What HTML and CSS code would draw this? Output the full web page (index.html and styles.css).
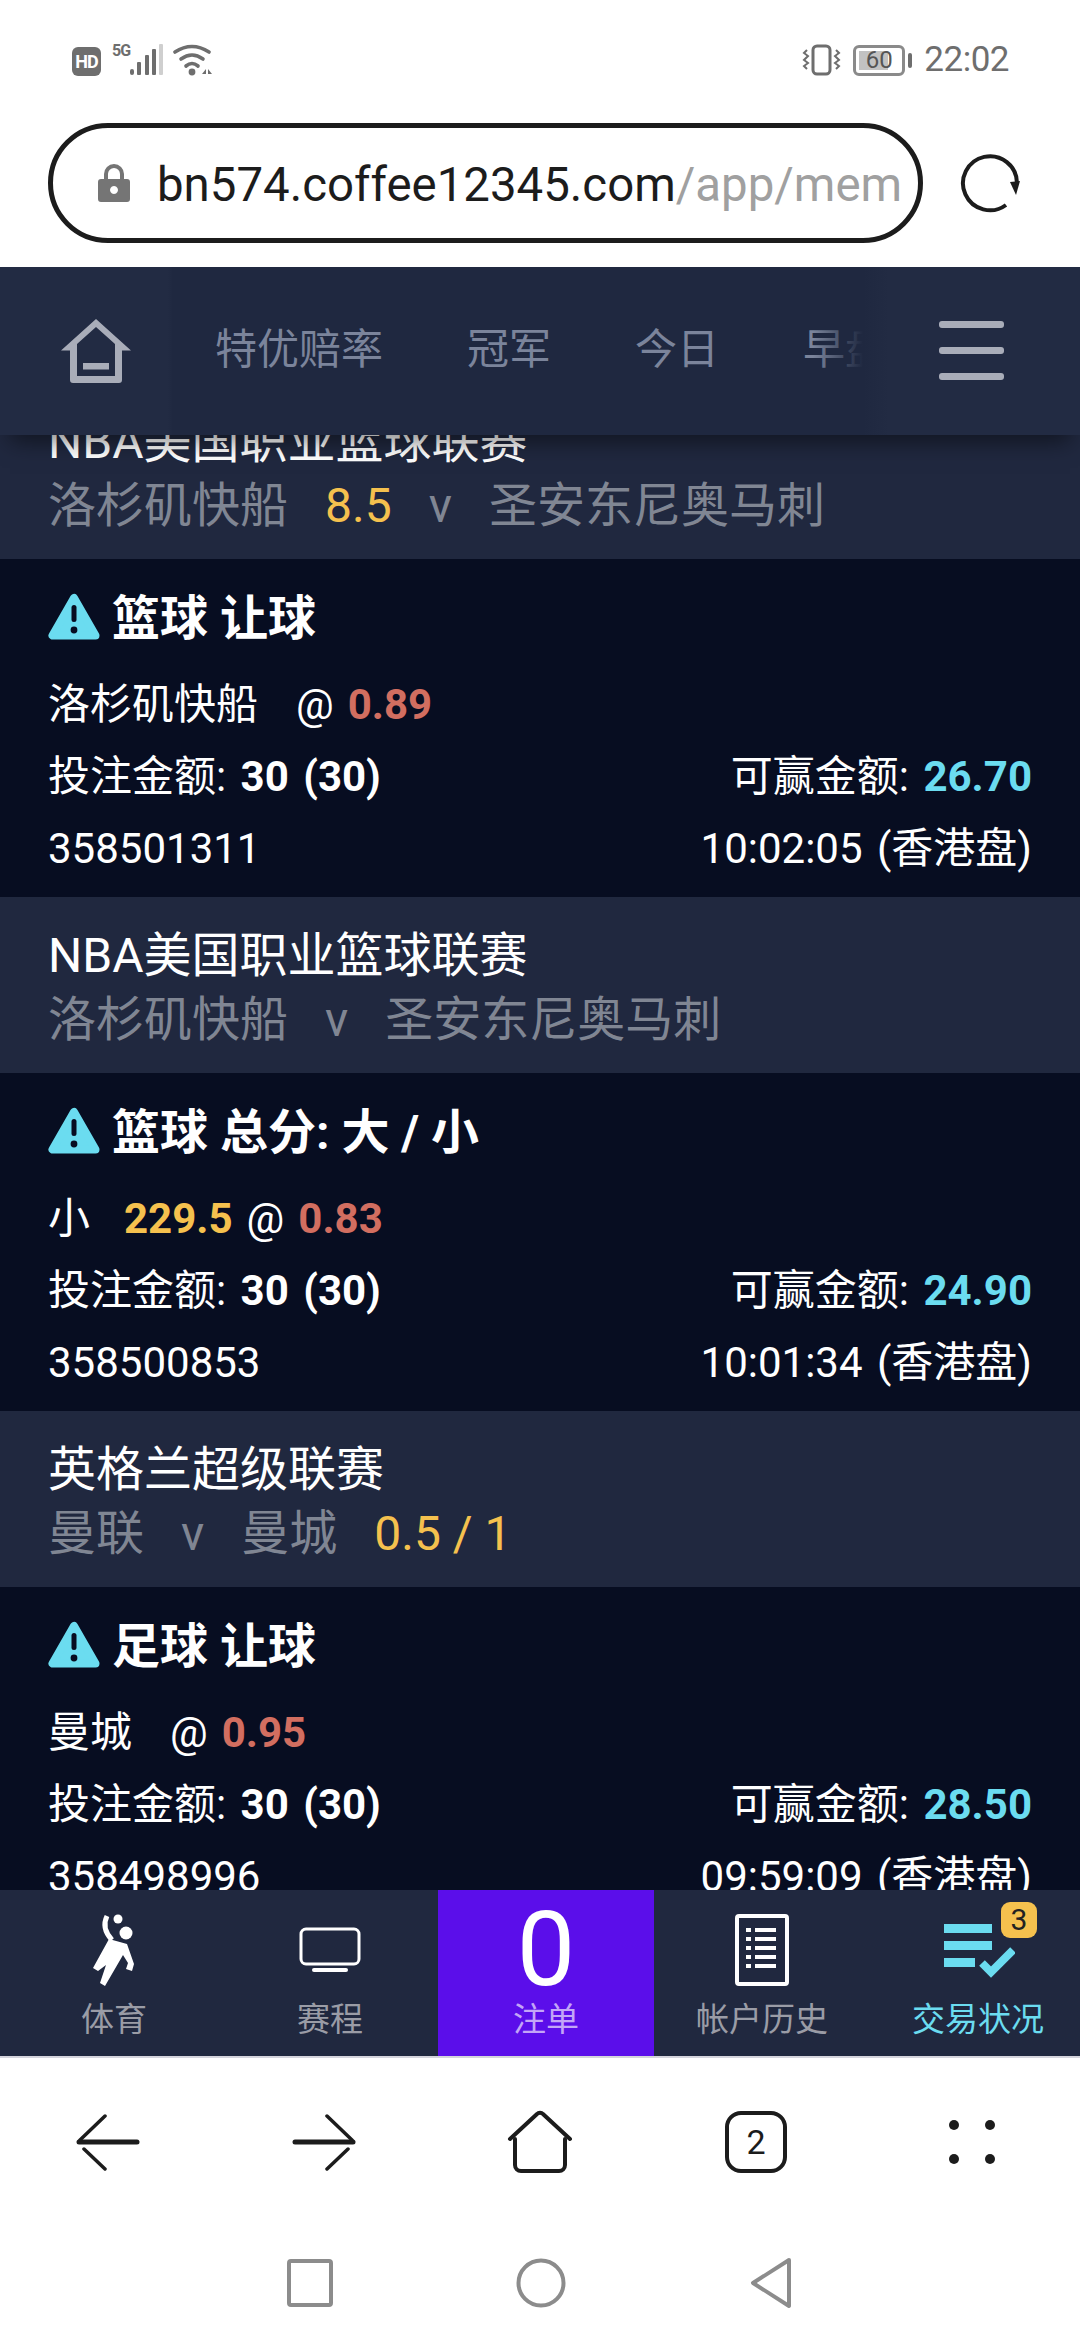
FILE: index.html
```html
<!DOCTYPE html>
<html lang="zh-CN">

<head>
    <meta charset="UTF-8">
    <meta name="viewport" content="width=device-width, initial-scale=1.0">
    <title>交易状况</title>
    <link rel="stylesheet" href="styles.css">
</head>

<body>
    <div class="phone">
        <!-- status bar -->
        <div class="status">
            <div class="status-group">
                <span class="hd">HD</span>
                <span class="net">5G</span>
                <svg class="signal" width="36" height="32" viewBox="0 0 36 32">
                    <rect x="0" y="25" width="4" height="6" rx="2" fill="#6e6e6e"/>
                    <rect x="7" y="18" width="4" height="13" rx="1" fill="#6e6e6e"/>
                    <rect x="15" y="11" width="4" height="20" rx="1" fill="#6e6e6e"/>
                    <rect x="22" y="5" width="4" height="26" rx="1" fill="#6e6e6e"/>
                    <rect x="29" y="0" width="4" height="31" rx="1" fill="#cfcfcf"/>
                </svg>
                <svg class="wifi" width="44" height="34" viewBox="0 0 44 34" fill="none" stroke="#6e6e6e" stroke-width="3.6" stroke-linecap="round">
                    <path d="M4 9Q21-2 38 9"/>
                    <path d="M10 16Q21 8 32 16"/>
                    <path d="M15 23Q21 18 27 23"/>
                    <circle cx="21" cy="29" r="3.4" fill="#6e6e6e" stroke="none"/>
                    <path d="M35 26l-4 5h4zM37 26l4 5h-4z" fill="#6e6e6e" stroke="none"/>
                </svg>
            </div>
            <div class="status-group">
                <svg width="40" height="32" viewBox="0 0 40 32" fill="none" stroke="#6e6e6e">
                    <rect x="11" y="2" width="17" height="28" rx="4" stroke-width="3"/>
                    <path d="M5 6L2 9l4 3-4 4 4 3-4 3 3 3M34 6l3 3-4 3 4 4-4 3 4 3-3 3" stroke-width="2"/>
                </svg>
                <div class="battery"><span>60</span></div>
                <i class="battery-nub"></i>
                <span class="time">22:02</span>
            </div>
        </div>

        <!-- address bar -->
        <div class="address">
            <div class="url-pill">
                <svg width="32" height="38" viewBox="0 0 32 38">
                    <path d="M8 16V10a8 8 0 0 1 16 0v6" fill="none" stroke="#757575" stroke-width="4"/>
                    <path fill-rule="evenodd" fill="#757575" d="M3 15h26a3 3 0 0 1 3 3v17a3 3 0 0 1-3 3H3a3 3 0 0 1-3-3V18a3 3 0 0 1 3-3zM16 22a4 4 0 1 0 .01 0z"/>
                </svg>
                <div class="url"><span class="host">bn574.coffee12345.com</span><span class="path">/app/member/transaction</span></div>
            </div>
            <svg class="reload" width="60" height="60" viewBox="0 0 60 60" fill="none">
                <path d="M46 52A27 27 0 1 1 57 30" stroke="#1c1c1c" stroke-width="4"/>
                <path d="M50 29L60 28L56 42z" fill="#1c1c1c"/>
            </svg>
        </div>

        <!-- site header -->
        <div class="header">
            <div class="home-btn">
                <svg width="72" height="66" viewBox="0 0 72 66" fill="none">
                    <path d="M36 1L1 32.5h9V62a3 3 0 0 0 3 3h46a3 3 0 0 0 3-3V32.5h9zM36 9L55 26V58H17V26z" fill="#a9adb9" fill-rule="evenodd"/>
                    <rect x="23" y="45" width="26" height="6.5" fill="#a9adb9"/>
                </svg>
            </div>
            <div class="tabs">
                <div class="tab">特优赔率</div>
                <div class="tab">冠军</div>
                <div class="tab">今日</div>
                <div class="tab">早盘</div>
                <div class="tab">串关</div>
            </div>
            <div class="menu-btn"><i></i><i></i><i></i></div>
        </div>

        <!-- bet list -->
        <div class="list">
            <div class="league first">
                <div class="league-name">NBA美国职业篮球联赛</div>
                <div class="teams"><span>洛杉矶快船</span><span class="hdp">8.5</span><span>v</span><span>圣安东尼奥马刺</span></div>
            </div>
            <div class="bet">
                <div class="bet-title">
                    <svg class="warn" width="52" height="48" viewBox="0 0 52 48">
                        <path d="M26 5L4.500 42.500h43z" fill="#6bdcf0" stroke="#6bdcf0" stroke-width="8" stroke-linejoin="round"/>
                        <rect x="23.500" y="12" width="5" height="17" rx="2.500" fill="#070d21"/>
                        <circle cx="26" cy="37" r="3.400" fill="#070d21"/>
                    </svg>
                    <span>篮球 让球</span>
                </div>
                <div class="bet-row"><div><span class="sel">洛杉矶快船</span>@<b class="odds">0.89</b></div></div>
                <div class="bet-row"><div>投注金额: <b>30 (30)</b></div><div>可赢金额: <b class="win">26.70</b></div></div>
                <div class="bet-row"><div>358501311</div><div>10:02:05 (香港盘)</div></div>
            </div>
            <div class="league">
                <div class="league-name">NBA美国职业篮球联赛</div>
                <div class="teams"><span>洛杉矶快船</span><span>v</span><span>圣安东尼奥马刺</span></div>
            </div>
            <div class="bet">
                <div class="bet-title">
                    <svg class="warn" width="52" height="48" viewBox="0 0 52 48">
                        <path d="M26 5L4.500 42.500h43z" fill="#6bdcf0" stroke="#6bdcf0" stroke-width="8" stroke-linejoin="round"/>
                        <rect x="23.500" y="12" width="5" height="17" rx="2.500" fill="#070d21"/>
                        <circle cx="26" cy="37" r="3.400" fill="#070d21"/>
                    </svg>
                    <span>篮球 总分: 大 / 小</span>
                </div>
                <div class="bet-row"><div><span class="sel-short">小</span><b class="hdp-bold">229.5</b>@<b class="odds">0.83</b></div></div>
                <div class="bet-row"><div>投注金额: <b>30 (30)</b></div><div>可赢金额: <b class="win">24.90</b></div></div>
                <div class="bet-row"><div>358500853</div><div>10:01:34 (香港盘)</div></div>
            </div>
            <div class="league">
                <div class="league-name">英格兰超级联赛</div>
                <div class="teams"><span>曼联</span><span>v</span><span>曼城</span><span class="hdp">0.5 / 1</span></div>
            </div>
            <div class="bet">
                <div class="bet-title">
                    <svg class="warn" width="52" height="48" viewBox="0 0 52 48">
                        <path d="M26 5L4.500 42.500h43z" fill="#6bdcf0" stroke="#6bdcf0" stroke-width="8" stroke-linejoin="round"/>
                        <rect x="23.500" y="12" width="5" height="17" rx="2.500" fill="#070d21"/>
                        <circle cx="26" cy="37" r="3.400" fill="#070d21"/>
                    </svg>
                    <span>足球 让球</span>
                </div>
                <div class="bet-row"><div><span class="sel">曼城</span>@<b class="odds">0.95</b></div></div>
                <div class="bet-row"><div>投注金额: <b>30 (30)</b></div><div>可赢金额: <b class="win">28.50</b></div></div>
                <div class="bet-row"><div>358498996</div><div>09:59:09 (香港盘)</div></div>
            </div>
        </div>

        <!-- site footer nav -->
        <div class="nav">
            <div class="nav-item">
                <div class="nav-icon">
                    <svg width="46" height="76" viewBox="0 0 46 76">
                        <circle cx="27" cy="7" r="4.500" fill="#fff"/>
                        <circle cx="35" cy="21" r="6.500" fill="#fff"/>
                        <path d="M16 4Q10 16 21 28" fill="none" stroke="#fff" stroke-width="5"/>
                        <path d="M18 27L36 32L43 52L41 59L35 57L37 51L32 43L14 74L9 71L15 53L7 59L2 56z" fill="#fff"/>
                    </svg>
                </div>
                <div class="nav-label">体育</div>
            </div>
            <div class="nav-item">
                <div class="nav-icon">
                    <svg width="62" height="46" viewBox="0 0 62 46" fill="none">
                        <rect x="2" y="2" width="58" height="35" rx="5" stroke="#fff" stroke-width="3"/>
                        <rect x="13" y="41" width="36" height="4" rx="2" fill="#fff"/>
                    </svg>
                </div>
                <div class="nav-label">赛程</div>
            </div>
            <div class="nav-item on">
                <div class="nav-icon bet-count">0</div>
                <div class="nav-label">注单</div>
            </div>
            <div class="nav-item">
                <div class="nav-icon">
                    <svg width="54" height="72" viewBox="0 0 54 72">
                        <rect x="2" y="2" width="50" height="68" rx="2" fill="none" stroke="#fff" stroke-width="4"/>
                        <g fill="#fff">
                            <rect x="11" y="14" width="5" height="4"/><rect x="20" y="14" width="21" height="4"/>
                            <rect x="11" y="23" width="5" height="4"/><rect x="20" y="23" width="21" height="4"/>
                            <rect x="11" y="32" width="5" height="4"/><rect x="20" y="32" width="21" height="4"/>
                            <rect x="11" y="41" width="5" height="4"/><rect x="20" y="41" width="21" height="4"/>
                            <rect x="11" y="50" width="5" height="4"/><rect x="20" y="50" width="21" height="4"/>
                        </g>
                    </svg>
                </div>
                <div class="nav-label">帐户历史</div>
            </div>
            <div class="nav-item active">
                <div class="nav-icon">
                    <svg width="74" height="56" viewBox="0 0 74 56">
                        <rect x="3" y="2" width="48" height="9" fill="#6bdcf0"/>
                        <rect x="3" y="19" width="48" height="9" fill="#6bdcf0"/>
                        <rect x="3" y="36" width="31" height="9" fill="#6bdcf0"/>
                        <path d="M41 41L50 50L72 28" fill="none" stroke="#6bdcf0" stroke-width="8"/>
                    </svg>
                </div>
                <div class="nav-label">交易状况</div>
                <span class="badge">3</span>
            </div>
        </div>

        <!-- browser toolbar -->
        <div class="toolbar">
            <div class="tool">
                <svg width="64" height="58" viewBox="0 0 64 58" fill="none" stroke="#1c1c1c" stroke-linecap="round">
                    <path d="M3 29H61" stroke-width="5"/>
                    <path d="M29 3L4 27M8 36L29 56" stroke-width="3.500"/>
                </svg>
            </div>
            <div class="tool">
                <svg width="64" height="58" viewBox="0 0 64 58" fill="none" stroke="#1c1c1c" stroke-linecap="round">
                    <path d="M3 29H61" stroke-width="5"/>
                    <path d="M35 3L60 27M56 36L35 56" stroke-width="3.500"/>
                </svg>
            </div>
            <div class="tool">
                <svg width="66" height="64" viewBox="0 0 66 64" fill="none" stroke="#1c1c1c" stroke-linecap="round" stroke-width="4">
                    <path d="M3 29L30 4a4 4 0 0 1 6 0L63 29"/>
                    <path d="M8 29V55a6 6 0 0 0 6 6H52a6 6 0 0 0 6-6V29"/>
                </svg>
            </div>
            <div class="tool">
                <div class="tab-count">2</div>
            </div>
            <div class="tool">
                <div class="dots"><i></i><i></i><i></i><i></i></div>
            </div>
        </div>

        <!-- system navigation -->
        <div class="sysnav">
            <svg width="46" height="48" viewBox="0 0 46 48"><rect x="2" y="2" width="42" height="44" rx="2" fill="none" stroke="#8c8c8c" stroke-width="4"/></svg>
            <svg width="50" height="50" viewBox="0 0 50 50"><circle cx="25" cy="25" r="22.500" fill="none" stroke="#8c8c8c" stroke-width="4"/></svg>
            <svg width="44" height="52" viewBox="0 0 44 52"><path d="M40 3L4 26L40 49z" fill="none" stroke="#8c8c8c" stroke-width="4" stroke-linejoin="round"/></svg>
        </div>
    </div>
</body>

</html>
```

FILE: styles.css
```css
* {
    margin: 0;
    padding: 0;
    box-sizing: border-box;
}

body {
    background: #fff;
    font-family: Roboto, "Noto Sans CJK SC", sans-serif;
}

.phone {
    width: 1080px;
    height: 2340px;
    display: flex;
    flex-direction: column;
    overflow: hidden;
}

/* status bar */
.status {
    height: 120px;
    flex: none;
    padding: 0 71px 0 72px;
    display: flex;
    align-items: center;
    justify-content: space-between;
    color: #6e6e6e;
}

.status-group {
    display: flex;
    align-items: center;
}

.hd {
    width: 29px;
    height: 29px;
    margin-top: 2px;
    border-radius: 6px;
    background: #6e6e6e;
    color: #fff;
    font-size: 18px;
    font-weight: 700;
    letter-spacing: -1px;
    line-height: 29px;
    text-align: center;
}

.net {
    align-self: flex-start;
    width: 17px;
    margin-left: 11px;
    font-size: 16px;
    font-weight: 700;
    letter-spacing: -1px;
    line-height: 16px;
}

.signal {
    margin-left: 1px;
}

.wifi {
    margin-left: 5px;
}

.battery {
    width: 52px;
    height: 31px;
    margin-left: 11px;
    padding: 3px;
    border: 3px solid #8a8a8a;
    border-radius: 6px;
    background: linear-gradient(to right, #c2c2c2 72%, #fff 72%) content-box;
    text-align: center;
}

.battery span {
    display: block;
    font-size: 24px;
    line-height: 19px;
    color: #555;
}

.battery-nub {
    width: 4px;
    height: 15px;
    margin-left: 3px;
    border-radius: 2px;
    background: #6e6e6e;
}

.time {
    margin-left: 12px;
    font-size: 35px;
    letter-spacing: -.5px;
    line-height: 40px;
}

/* address bar */
.address {
    height: 147px;
    flex: none;
    padding: 3px 0 24px 48px;
    display: flex;
    align-items: center;
}

.url-pill {
    width: 875px;
    height: 120px;
    padding: 0 18px 0 45px;
    border: 5px solid #1c1c1c;
    border-radius: 60px;
    display: flex;
    align-items: center;
}

.url {
    margin-left: 27px;
    padding-top: 4px;
    flex: 1;
    overflow: hidden;
    white-space: nowrap;
    font-size: 47.4px;
}

.host {
    color: #1c1c1c;
}

.path {
    color: #a0a0a0;
}

.reload {
    margin-left: 37px;
}

/* site header */
.header {
    height: 168px;
    flex: none;
    position: relative;
    z-index: 2;
    display: flex;
    background: #1f2840;
    box-shadow: 0 16px 22px -10px rgba(0, 0, 0, .5);
}

.home-btn {
    width: 173px;
    flex: none;
    padding: 51px 0 0 60px;
    background: linear-gradient(to right, #222b43 97%, #1f2840);
}

.tabs {
    flex: 1;
    position: relative;
    display: flex;
    overflow: hidden;
    min-width: 0;
}

.tabs::after {
    content: "";
    position: absolute;
    top: 0;
    right: 0;
    width: 50px;
    height: 100%;
    background: linear-gradient(to right, rgba(31, 40, 64, 0), #1f2840);
}

.tab {
    flex: none;
    padding: 0 42px;
    font-size: 42px;
    line-height: 166px;
    color: #7b849b;
}

.menu-btn {
    width: 217px;
    flex: none;
    padding-top: 54px;
    background: linear-gradient(to right, #1f2840, #222b43 12%);
    display: flex;
    flex-direction: column;
    align-items: center;
    gap: 19px;
}

.menu-btn i {
    width: 65px;
    height: 7px;
    border-radius: 3px;
    background: #a9adb9;
}

/* bet list */
.list {
    height: 1455px;
    flex: none;
    overflow: hidden;
    background: #070d21;
}

.league {
    height: 176px;
    padding: 26px 48px 0;
    background: #20283f;
}

.league.first {
    margin-top: -52px;
}

.league-name {
    font-size: 48px;
    line-height: 66px;
    color: #fff;
}

.teams {
    display: flex;
    gap: 37px;
    font-size: 48px;
    line-height: 62px;
    color: #808693;
}

.hdp {
    color: #f5c14e;
}

.bet {
    height: 338px;
    padding: 22px 48px 0;
    color: #fff;
}

.bet-title {
    height: 72px;
    margin-bottom: 16px;
    display: flex;
    align-items: center;
    gap: 12px;
    font-size: 48px;
    font-weight: 700;
}

.bet-title span {
    padding-top: 4px;
    line-height: 72px;
}

.bet-row {
    height: 72px;
    display: flex;
    align-items: center;
    justify-content: space-between;
    font-size: 42px;
    line-height: 72px;
    word-spacing: 4px;
}

.sel {
    margin-right: 38px;
}

.sel-short {
    margin-right: 34px;
}

.hdp-bold {
    margin-right: 14px;
    color: #f5c14e;
}

.odds {
    margin-left: 14px;
    color: #d26e60;
}

.win {
    color: #6bdcf0;
}

/* site footer nav */
.nav {
    height: 166px;
    flex: none;
    padding-left: 6px;
    position: relative;
    z-index: 2;
    display: flex;
    overflow: hidden;
    background: #20283f;
}

.nav-item {
    width: 216px;
    flex: none;
    position: relative;
    padding-top: 10px;
    color: #9a9ca6;
}

.nav-icon {
    height: 100px;
    display: flex;
    align-items: center;
    justify-content: center;
}

.nav-label {
    font-size: 33px;
    line-height: 40px;
    text-align: center;
}

.nav-item.on {
    background: #5b0eea;
    color: #c3a5f7;
}

.nav-item.active {
    color: #6bdcf0;
}

.bet-count {
    font-size: 104px;
    line-height: 100px;
    color: #fff;
}

.badge {
    position: absolute;
    left: 131px;
    top: 12px;
    width: 36px;
    height: 36px;
    border-radius: 9px;
    background: #f5c14e;
    color: #222;
    font-size: 30px;
    line-height: 36px;
    text-align: center;
}

/* browser toolbar */
.toolbar {
    height: 170px;
    flex: none;
    border-top: 2px solid #d4d4dc;
    display: flex;
}

.tool {
    width: 216px;
    display: flex;
    align-items: center;
    justify-content: center;
}

.tab-count {
    width: 62px;
    height: 62px;
    border: 4px solid #1c1c1c;
    border-radius: 16px;
    color: #1c1c1c;
    font-size: 34px;
    line-height: 54px;
    text-align: center;
}

.dots {
    width: 46px;
    display: grid;
    grid-template-columns: 10px 10px;
    justify-content: space-between;
    row-gap: 24px;
}

.dots i {
    height: 10px;
    border-radius: 50%;
    background: #1c1c1c;
}

/* system navigation */
.sysnav {
    height: 114px;
    flex: none;
    display: flex;
    align-items: center;
    justify-content: center;
    gap: 183px;
}
```
